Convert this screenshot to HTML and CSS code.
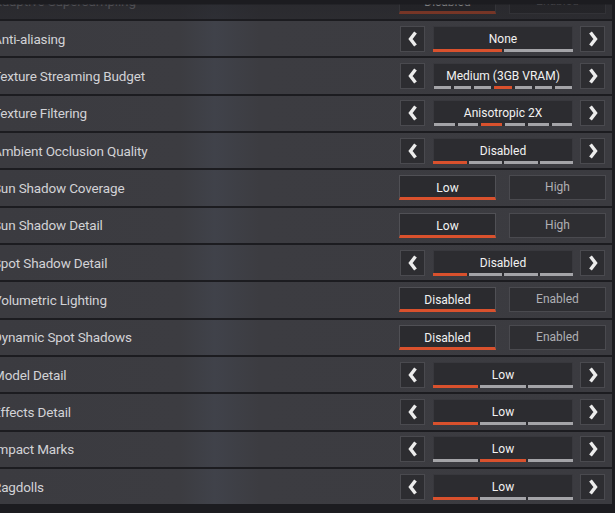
FILE: index.html
```html
<!DOCTYPE html>
<html lang="en">

<head>
    <meta charset="UTF-8">
    <title>Video Settings</title>
    <link rel="stylesheet" href="styles.css">
</head>

<body>
    <div id="panel">
        <div class="fade"></div>

        <div class="row ghost">
            <span class="label">Adaptive Supersampling</span>
            <div class="toggle">
                <span class="opt selected">Disabled</span>
                <span class="opt">Enabled</span>
            </div>
        </div>

        <div class="row">
            <span class="label">Anti-aliasing</span>
            <div class="carousel">
                <span class="arrow"><svg viewBox="0 0 10 16"><polyline points="7.5,1.5 2.5,8 7.5,14.5" /></svg></span>
                <div class="value"><span>None</span>
                    <div class="ticks"><i class="on"></i><i></i></div>
                </div>
                <span class="arrow"><svg viewBox="0 0 10 16"><polyline points="2.5,1.5 7.5,8 2.5,14.5" /></svg></span>
            </div>
        </div>

        <div class="row">
            <span class="label">Texture Streaming Budget</span>
            <div class="carousel">
                <span class="arrow"><svg viewBox="0 0 10 16"><polyline points="7.5,1.5 2.5,8 7.5,14.5" /></svg></span>
                <div class="value"><span>Medium (3GB VRAM)</span>
                    <div class="ticks wide"><i></i><i></i><i></i><i class="on"></i><i></i><i></i><i></i></div>
                </div>
                <span class="arrow"><svg viewBox="0 0 10 16"><polyline points="2.5,1.5 7.5,8 2.5,14.5" /></svg></span>
            </div>
        </div>

        <div class="row">
            <span class="label">Texture Filtering</span>
            <div class="carousel">
                <span class="arrow"><svg viewBox="0 0 10 16"><polyline points="7.5,1.5 2.5,8 7.5,14.5" /></svg></span>
                <div class="value"><span>Anisotropic 2X</span>
                    <div class="ticks wide"><i></i><i></i><i class="on"></i><i></i><i></i><i></i></div>
                </div>
                <span class="arrow"><svg viewBox="0 0 10 16"><polyline points="2.5,1.5 7.5,8 2.5,14.5" /></svg></span>
            </div>
        </div>

        <div class="row">
            <span class="label">Ambient Occlusion Quality</span>
            <div class="carousel">
                <span class="arrow"><svg viewBox="0 0 10 16"><polyline points="7.5,1.5 2.5,8 7.5,14.5" /></svg></span>
                <div class="value"><span>Disabled</span>
                    <div class="ticks"><i class="on"></i><i></i><i></i><i></i></div>
                </div>
                <span class="arrow"><svg viewBox="0 0 10 16"><polyline points="2.5,1.5 7.5,8 2.5,14.5" /></svg></span>
            </div>
        </div>

        <div class="row">
            <span class="label">Sun Shadow Coverage</span>
            <div class="toggle">
                <span class="opt selected">Low</span>
                <span class="opt">High</span>
            </div>
        </div>

        <div class="row">
            <span class="label">Sun Shadow Detail</span>
            <div class="toggle">
                <span class="opt selected">Low</span>
                <span class="opt">High</span>
            </div>
        </div>

        <div class="row">
            <span class="label">Spot Shadow Detail</span>
            <div class="carousel">
                <span class="arrow"><svg viewBox="0 0 10 16"><polyline points="7.5,1.5 2.5,8 7.5,14.5" /></svg></span>
                <div class="value"><span>Disabled</span>
                    <div class="ticks"><i class="on"></i><i></i><i></i><i></i></div>
                </div>
                <span class="arrow"><svg viewBox="0 0 10 16"><polyline points="2.5,1.5 7.5,8 2.5,14.5" /></svg></span>
            </div>
        </div>

        <div class="row">
            <span class="label">Volumetric Lighting</span>
            <div class="toggle">
                <span class="opt selected">Disabled</span>
                <span class="opt">Enabled</span>
            </div>
        </div>

        <div class="row">
            <span class="label">Dynamic Spot Shadows</span>
            <div class="toggle">
                <span class="opt selected">Disabled</span>
                <span class="opt">Enabled</span>
            </div>
        </div>

        <div class="row">
            <span class="label">Model Detail</span>
            <div class="carousel">
                <span class="arrow"><svg viewBox="0 0 10 16"><polyline points="7.5,1.5 2.5,8 7.5,14.5" /></svg></span>
                <div class="value"><span>Low</span>
                    <div class="ticks"><i class="on"></i><i></i><i></i></div>
                </div>
                <span class="arrow"><svg viewBox="0 0 10 16"><polyline points="2.5,1.5 7.5,8 2.5,14.5" /></svg></span>
            </div>
        </div>

        <div class="row">
            <span class="label">Effects Detail</span>
            <div class="carousel">
                <span class="arrow"><svg viewBox="0 0 10 16"><polyline points="7.5,1.5 2.5,8 7.5,14.5" /></svg></span>
                <div class="value"><span>Low</span>
                    <div class="ticks"><i class="on"></i><i></i><i></i></div>
                </div>
                <span class="arrow"><svg viewBox="0 0 10 16"><polyline points="2.5,1.5 7.5,8 2.5,14.5" /></svg></span>
            </div>
        </div>

        <div class="row">
            <span class="label">Impact Marks</span>
            <div class="carousel">
                <span class="arrow"><svg viewBox="0 0 10 16"><polyline points="7.5,1.5 2.5,8 7.5,14.5" /></svg></span>
                <div class="value"><span>Low</span>
                    <div class="ticks"><i></i><i class="on"></i><i></i></div>
                </div>
                <span class="arrow"><svg viewBox="0 0 10 16"><polyline points="2.5,1.5 7.5,8 2.5,14.5" /></svg></span>
            </div>
        </div>

        <div class="row">
            <span class="label">Ragdolls</span>
            <div class="carousel">
                <span class="arrow"><svg viewBox="0 0 10 16"><polyline points="7.5,1.5 2.5,8 7.5,14.5" /></svg></span>
                <div class="value"><span>Low</span>
                    <div class="ticks"><i class="on"></i><i></i><i></i></div>
                </div>
                <span class="arrow"><svg viewBox="0 0 10 16"><polyline points="2.5,1.5 7.5,8 2.5,14.5" /></svg></span>
            </div>
        </div>
    </div>
</body>

</html>
```

FILE: styles.css
```css
* {
    margin: 0;
    padding: 0;
    box-sizing: border-box;
}

html,
body {
    height: 100%;
}

body {
    background: #1c1c20;
    font-family: Roboto, "Liberation Sans", sans-serif;
    overflow: hidden;
}

#panel {
    position: relative;
    width: 612px;
    display: flex;
    flex-direction: column;
    gap: 2px;
    margin-top: -16.4px;
}

/* top edge of the scroll list fades into the header */
.fade {
    position: absolute;
    left: 0;
    top: 0;
    width: 100%;
    height: 36px;
    background: linear-gradient(to bottom, #1c1c20 0, #1c1c20 20px, rgba(28, 28, 32, 0.55) 21px, rgba(28, 28, 32, 0.5) 35px, rgba(28, 28, 32, 0) 36px);
    z-index: 2;
}

.row {
    height: 35.33px;
    display: flex;
    align-items: center;
    justify-content: space-between;
    padding-right: 7px;
    background: linear-gradient(to right, #3b3b40 0, #3c3c41 180px, #40424a 215px, #3c3c41 260px, #3b3b40 100%);
    overflow: hidden;
}

.label {
    margin-left: -7px;
    font-size: 13.5px;
    letter-spacing: -0.15px;
    color: #d2d2d6;
    white-space: nowrap;
}

.ghost .label {
    color: #8c8c92;
}

.carousel {
    display: flex;
    align-items: center;
    width: 205px;
    height: 26px;
}

.arrow {
    width: 25px;
    height: 26px;
    background: #2d2d31;
    border: 1px solid #4a4a4f;
    display: flex;
    align-items: center;
    justify-content: center;
}

.arrow svg {
    width: 10px;
    height: 16px;
}

.arrow polyline {
    fill: none;
    stroke: #ececec;
    stroke-width: 3.4;
    stroke-linejoin: miter;
}

.value {
    width: 140px;
    height: 26px;
    margin: 0 7px 0 8px;
    background: #2c2c30;
    border: 1px solid #38383d;
    border-bottom: 0;
    display: flex;
    flex-direction: column;
    justify-content: space-between;
    align-items: center;
    padding-top: 5px;
    font-size: 12px;
    color: #f2f2f2;
}

.ticks {
    display: flex;
    gap: 2px;
    width: 140px;
    margin: 0 -1px;
    height: 3px;
}

.ticks.wide {
    gap: 3px;
    padding: 0 1px;
}

.ticks i {
    flex: 1;
    background: #a4a4a8;
}

.ticks i.on {
    background: #d9512d;
}

.toggle {
    display: flex;
    gap: 13px;
    width: 207px;
    margin-right: -1px;
}

.opt {
    width: 97px;
    height: 25px;
    background: #2e2e32;
    border: 1px solid #4a4a4f;
    color: #b0b0b4;
    font-size: 12px;
    line-height: 23px;
    text-align: center;
}

.opt.selected {
    background: #2b2b2f;
    border-color: #505055;
    border-bottom: 3px solid #d9512d;
    color: #f2f2f2;
    line-height: 24px;
}
```
